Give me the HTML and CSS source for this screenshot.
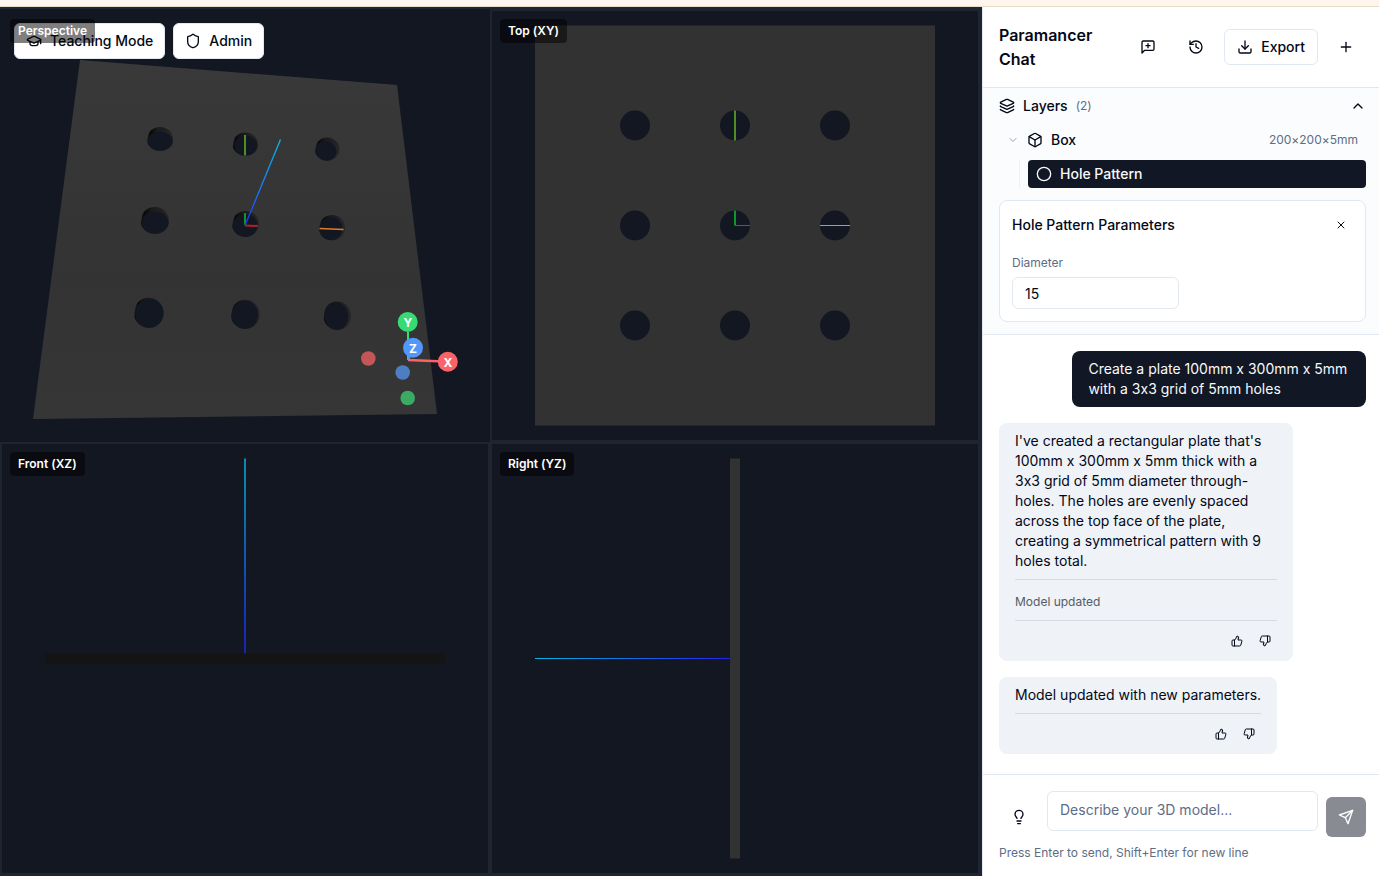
FILE: index.html
```html
<!DOCTYPE html>
<html lang="en">
<head>
    <meta charset="UTF-8">
    <meta name="viewport" content="width=device-width, initial-scale=1.0">
    <title>Paramancer</title>
    <link rel="stylesheet" href="styles.css">
</head>
<body>
    <div class="top-strip"></div>

    <div class="app">
        <main class="workspace">
            <div class="toolbar">
                <button class="tool-button" type="button">
                    <svg class="icon" viewBox="0 0 24 24"><path d="M21.42 10.922a1 1 0 0 0-.019-1.838L12.83 5.18a2 2 0 0 0-1.66 0L2.6 9.08a1 1 0 0 0 0 1.832l8.57 3.908a2 2 0 0 0 1.66 0z"/><path d="M22 10v6"/><path d="M6 12.5V16a6 3 0 0 0 12 0v-3.5"/></svg>
                    Teaching Mode
                </button>
                <button class="tool-button" type="button">
                    <svg class="icon" viewBox="0 0 24 24"><path d="M20 13c0 5-3.5 7.5-7.66 8.95a1 1 0 0 1-.67-.01C7.5 20.5 4 18 4 13V6a1 1 0 0 1 1-1c2 0 4.5-1.2 6.24-2.72a1.17 1.17 0 0 1 1.52 0C14.51 3.81 17 5 19 5a1 1 0 0 1 1 1z"/></svg>
                    Admin
                </button>
            </div>

            <section class="viewport viewport-3d">
                <h2 class="viewport-label">Perspective</h2>
                <svg class="scene" viewBox="0 9 490 433">
                    <defs>
                        <linearGradient id="plate" x1="0" y1="0" x2="0" y2="1">
                            <stop offset="0" stop-color="#393939"/>
                            <stop offset="0.6" stop-color="#333333"/>
                            <stop offset="1" stop-color="#363636"/>
                        </linearGradient>
                        <linearGradient id="wall" x1="0" y1="0.3" x2="1" y2="0.5">
                            <stop offset="0" stop-color="#4a4a4a"/>
                            <stop offset="0.1" stop-color="#080808"/>
                            <stop offset="0.35" stop-color="#1b1b1b"/>
                            <stop offset="1" stop-color="#272727"/>
                        </linearGradient>
                        <linearGradient id="zaxis" gradientUnits="userSpaceOnUse" x1="245" y1="225" x2="280" y2="140">
                            <stop offset="0" stop-color="#1f30ff"/>
                            <stop offset="0.4" stop-color="#1478ff"/>
                            <stop offset="1" stop-color="#08b8e8"/>
                        </linearGradient>
                    </defs>
                    <polygon points="80,60 397,85 437,414 33,419" fill="url(#plate)"/>
                    <g fill="url(#wall)">
                        <ellipse cx="160" cy="139" rx="13" ry="12"/>
                        <ellipse cx="245.3" cy="144.2" rx="12.7" ry="11.6"/>
                        <ellipse cx="327.2" cy="149.2" rx="12.2" ry="11.6"/>
                        <ellipse cx="154.8" cy="220.4" rx="14.2" ry="13.4"/>
                        <ellipse cx="245.5" cy="224" rx="13.5" ry="13"/>
                        <ellipse cx="332" cy="227.7" rx="13" ry="12.7"/>
                        <ellipse cx="148.8" cy="312.8" rx="14.8" ry="15.1"/>
                        <ellipse cx="245.3" cy="314.4" rx="14.4" ry="14.7"/>
                        <ellipse cx="337.3" cy="315.9" rx="13.8" ry="14.3"/>
                    </g>
                    <g fill="#121722">
                        <ellipse cx="160.2" cy="141.3" rx="12.5" ry="9.6"/>
                        <ellipse cx="245.9" cy="145.6" rx="11.5" ry="10"/>
                        <ellipse cx="326" cy="150.8" rx="10.6" ry="9.6" transform="rotate(25 326 150.8)"/>
                        <ellipse cx="155.2" cy="222.6" rx="13.4" ry="11"/>
                        <ellipse cx="245.3" cy="225.5" rx="12.3" ry="11.3"/>
                        <ellipse cx="330.9" cy="228.7" rx="11.6" ry="11.3"/>
                        <ellipse cx="149.4" cy="313.2" rx="14.2" ry="14.4"/>
                        <ellipse cx="244.9" cy="314.9" rx="13.2" ry="14"/>
                        <ellipse cx="336.3" cy="315.9" rx="12" ry="13.6" transform="rotate(-15 336.3 315.9)"/>
                    </g>
                    <g fill="none" stroke-width="2">
                        <path d="M245 135V155.5" stroke="#4f8e22"/>
                        <path d="M245 213V225" stroke="#0f9628"/>
                        <path d="M245 225.5L258 226" stroke="#b3231f"/>
                        <path d="M319.5 228.5L343.5 229.5" stroke="#e07c2c" stroke-width="1.5"/>
                        <path d="M245 225.5L280.5 139.5" stroke="url(#zaxis)" stroke-width="1.3"/>
                    </g>

                    <!-- orientation gizmo -->
                    <circle cx="368.3" cy="358.5" r="7.3" fill="#c45658"/>
                    <circle cx="402.7" cy="372.5" r="7.3" fill="#4b7ec2"/>
                    <circle cx="407.7" cy="398" r="7.3" fill="#3bab64"/>
                    <path d="M408 332V360" stroke="#36dc73" stroke-width="2"/>
                    <path d="M408 360L438 361.3" stroke="#fb6368" stroke-width="2.5"/>
                    <path d="M408 360L412 350" stroke="#5297fa" stroke-width="2.5"/>
                    <circle cx="407.7" cy="322" r="10" fill="#36dc73"/>
                    <circle cx="413" cy="347.7" r="10" fill="#5297fa"/>
                    <circle cx="447.8" cy="361.7" r="10" fill="#fb6368"/>
                    <text class="gizmo-text" x="408" y="327">Y</text>
                    <text class="gizmo-text" x="413" y="353">Z</text>
                    <text class="gizmo-text" x="448" y="367">X</text>
                </svg>
            </section>

            <section class="viewport">
                <h2 class="viewport-label">Top (XY)</h2>
                <svg class="scene" viewBox="-243 -214 486 428">
                    <rect x="-200" y="-200" width="400" height="400" fill="#323232"/>
                    <g fill="#121722">
                        <circle cx="-100" cy="-100" r="15"/>
                        <circle cx="0" cy="-100" r="15"/>
                        <circle cx="100" cy="-100" r="15"/>
                        <circle cx="-100" cy="0" r="15"/>
                        <circle cx="0" cy="0" r="15"/>
                        <circle cx="100" cy="0" r="15"/>
                        <circle cx="-100" cy="100" r="15"/>
                        <circle cx="0" cy="100" r="15"/>
                        <circle cx="100" cy="100" r="15"/>
                    </g>
                    <rect x="-1" y="-115" width="2" height="30" fill="#4f8e22"/>
                    <rect x="-1" y="-15" width="2" height="15" fill="#0f9628"/>
                    <rect x="0" y="-0.5" width="15" height="1" fill="#e0221c"/>
                    <rect x="85" y="-0.5" width="30" height="1" fill="#f08a2a"/>
                </svg>
            </section>

            <section class="viewport">
                <h2 class="viewport-label">Front (XZ)</h2>
                <svg class="scene" viewBox="-243 -214 486 428">
                    <defs>
                        <linearGradient id="front-z" x1="0" y1="1" x2="0" y2="0">
                            <stop offset="0" stop-color="#1a20b4"/>
                            <stop offset="1" stop-color="#0a8fae"/>
                        </linearGradient>
                    </defs>
                    <rect x="-200" y="-5" width="400" height="10" fill="#141414"/>
                    <rect x="-1" y="-200" width="2" height="195" fill="url(#front-z)"/>
                </svg>
            </section>

            <section class="viewport">
                <h2 class="viewport-label">Right (YZ)</h2>
                <svg class="scene" viewBox="-243 -214 486 428">
                    <defs>
                        <linearGradient id="right-z" x1="1" y1="0" x2="0" y2="0">
                            <stop offset="0" stop-color="#2222ee"/>
                            <stop offset="1" stop-color="#08b4e0"/>
                        </linearGradient>
                    </defs>
                    <rect x="-200" y="-0.5" width="195" height="1" fill="url(#right-z)"/>
                    <rect x="-5" y="-200" width="10" height="400" fill="#323232"/>
                </svg>
            </section>
        </main>

        <aside class="sidebar">
            <header class="chat-header">
                <h1>Paramancer Chat</h1>
                <div class="header-actions">
                    <button class="icon-button" type="button" aria-label="Feedback">
                        <svg class="icon" viewBox="0 0 24 24"><path d="M21 15a2 2 0 0 1-2 2H7l-4 4V5a2 2 0 0 1 2-2h14a2 2 0 0 1 2 2z"/><path d="M12 7v6"/><path d="M9 10h6"/></svg>
                    </button>
                    <button class="icon-button" type="button" aria-label="History">
                        <svg class="icon" viewBox="0 0 24 24"><path d="M3 12a9 9 0 1 0 9-9 9.75 9.75 0 0 0-6.74 2.74L3 8"/><path d="M3 3v5h5"/><path d="M12 7v5l4 2"/></svg>
                    </button>
                    <button class="export-button" type="button">
                        <svg class="icon" viewBox="0 0 24 24"><path d="M21 15v4a2 2 0 0 1-2 2H5a2 2 0 0 1-2-2v-4"/><path d="M7 10l5 5 5-5"/><path d="M12 15V3"/></svg>
                        Export
                    </button>
                    <button class="icon-button" type="button" aria-label="New chat">
                        <svg class="icon" viewBox="0 0 24 24"><path d="M5 12h14"/><path d="M12 5v14"/></svg>
                    </button>
                </div>
            </header>

            <section class="layers">
                <button class="layers-toggle" type="button">
                    <svg class="icon" viewBox="0 0 24 24"><path d="M12.83 2.18a2 2 0 0 0-1.66 0L2.6 6.08a1 1 0 0 0 0 1.83l8.58 3.91a2 2 0 0 0 1.66 0l8.58-3.9a1 1 0 0 0 0-1.83z"/><path d="M2 12a1 1 0 0 0 .58.91l8.6 3.91a2 2 0 0 0 1.65 0l8.58-3.9A1 1 0 0 0 22 12"/><path d="M2 17a1 1 0 0 0 .58.91l8.6 3.91a2 2 0 0 0 1.65 0l8.58-3.9A1 1 0 0 0 22 17"/></svg>
                    Layers
                    <span class="count">(2)</span>
                    <svg class="icon push-right" viewBox="0 0 24 24"><path d="M18 15l-6-6-6 6"/></svg>
                </button>

                <button class="layer-row" type="button">
                    <svg class="icon icon-small icon-muted" viewBox="0 0 24 24"><path d="M6 9l6 6 6-6"/></svg>
                    <svg class="icon" viewBox="0 0 24 24"><path d="M21 8a2 2 0 0 0-1-1.73l-7-4a2 2 0 0 0-2 0l-7 4A2 2 0 0 0 3 8v8a2 2 0 0 0 1 1.73l7 4a2 2 0 0 0 2 0l7-4A2 2 0 0 0 21 16z"/><path d="M3.3 7L12 12l8.7-5"/><path d="M12 22V12"/></svg>
                    Box
                    <span class="count push-right">200×200×5mm</span>
                </button>
                <div class="layer-children">
                    <button class="layer-row selected" type="button">
                        <svg class="icon" viewBox="0 0 24 24"><circle cx="12" cy="12" r="10"/></svg>
                        Hole Pattern
                    </button>
                </div>

                <div class="params">
                    <div class="params-header">
                        <h3>Hole Pattern Parameters</h3>
                        <button class="mini-button" type="button" aria-label="Close">
                            <svg class="icon icon-small" viewBox="0 0 24 24"><path d="M18 6L6 18"/><path d="M6 6l12 12"/></svg>
                        </button>
                    </div>
                    <div class="params-grid">
                        <div class="field">
                            <label for="diameter">Diameter</label>
                            <input id="diameter" type="text" inputmode="numeric" value="15">
                        </div>
                    </div>
                </div>
            </section>

            <div class="messages">
                <div class="message user">
                    <p>Create a plate 100mm x 300mm x 5mm with a 3x3 grid of 5mm holes</p>
                </div>
                <div class="message">
                    <p>I've created a rectangular plate that's 100mm x 300mm x 5mm thick with a 3x3 grid of 5mm diameter through-holes. The holes are evenly spaced across the top face of the plate, creating a symmetrical pattern with 9 holes total.</p>
                    <div class="status">Model updated</div>
                    <div class="feedback">
                        <button class="mini-button" type="button" aria-label="Good response">
                            <svg class="icon icon-small" viewBox="0 0 24 24"><path d="M7 10v12"/><path d="M15 5.88L14 10h5.83a2 2 0 0 1 1.92 2.56l-2.33 8A2 2 0 0 1 17.5 22H4a2 2 0 0 1-2-2v-8a2 2 0 0 1 2-2h2.76a2 2 0 0 0 1.79-1.11L12 2a3.13 3.13 0 0 1 3 3.88z"/></svg>
                        </button>
                        <button class="mini-button" type="button" aria-label="Bad response">
                            <svg class="icon icon-small" viewBox="0 0 24 24"><path d="M17 14V2"/><path d="M9 18.12L10 14H4.17a2 2 0 0 1-1.92-2.56l2.33-8A2 2 0 0 1 6.5 2H20a2 2 0 0 1 2 2v8a2 2 0 0 1-2 2h-2.76a2 2 0 0 0-1.79 1.11L12 22a3.13 3.13 0 0 1-3-3.88z"/></svg>
                        </button>
                    </div>
                </div>
                <div class="message">
                    <p>Model updated with new parameters.</p>
                    <div class="feedback">
                        <button class="mini-button" type="button" aria-label="Good response">
                            <svg class="icon icon-small" viewBox="0 0 24 24"><path d="M7 10v12"/><path d="M15 5.88L14 10h5.83a2 2 0 0 1 1.92 2.56l-2.33 8A2 2 0 0 1 17.5 22H4a2 2 0 0 1-2-2v-8a2 2 0 0 1 2-2h2.76a2 2 0 0 0 1.79-1.11L12 2a3.13 3.13 0 0 1 3 3.88z"/></svg>
                        </button>
                        <button class="mini-button" type="button" aria-label="Bad response">
                            <svg class="icon icon-small" viewBox="0 0 24 24"><path d="M17 14V2"/><path d="M9 18.12L10 14H4.17a2 2 0 0 1-1.92-2.56l2.33-8A2 2 0 0 1 6.5 2H20a2 2 0 0 1 2 2v8a2 2 0 0 1-2 2h-2.76a2 2 0 0 0-1.79 1.11L12 22a3.13 3.13 0 0 1-3-3.88z"/></svg>
                        </button>
                    </div>
                </div>
            </div>

            <form class="composer">
                <div class="composer-row">
                    <button class="icon-button" type="button" aria-label="Suggestions">
                        <svg class="icon" viewBox="0 0 24 24"><path d="M15 14c.2-1 .7-1.7 1.5-2.5 1-.9 1.5-2.2 1.5-3.5A6 6 0 0 0 6 8c0 1 .2 2.2 1.5 3.5.7.7 1.3 1.5 1.5 2.5"/><path d="M9 18h6"/><path d="M10 22h4"/></svg>
                    </button>
                    <textarea rows="1" placeholder="Describe your 3D model..." aria-label="Message"></textarea>
                    <button class="icon-button send-button" type="button" aria-label="Send">
                        <svg class="icon" viewBox="0 0 24 24"><path d="M22 2L15 22l-4-9-9-4z"/><path d="M22 2L11 13"/></svg>
                    </button>
                </div>
                <p class="hint">Press Enter to send, Shift+Enter for new line</p>
            </form>
        </aside>
    </div>
</body>
</html>
```

FILE: styles.css
```css
* {
    box-sizing: border-box;
}

body {
    display: flex;
    flex-direction: column;
    height: 100vh;
    margin: 0;
    overflow: hidden;
    font-family: Inter, 'Liberation Sans', sans-serif;
    font-size: 14px;
    font-variant-ligatures: no-contextual;
    line-height: 20px;
    color: #020817;
    background-color: #fff;
}

h1, h2, h3, p {
    margin: 0;
}

button, input, textarea {
    font: inherit;
    font-variant-ligatures: no-contextual;
    color: inherit;
}

button {
    display: flex;
    align-items: center;
    gap: 8px;
    padding: 0;
    border: none;
    background: none;
    font-weight: 500;
    cursor: pointer;
}

.top-strip {
    flex: none;
    height: 7px;
    background-color: #fff5ef;
    border-bottom: 1px solid #e9dcc6;
}

.app {
    display: flex;
    flex: 1;
    min-height: 0;
}

.icon {
    flex: none;
    width: 16px;
    height: 16px;
    fill: none;
    stroke: currentColor;
    stroke-width: 2;
    stroke-linecap: round;
    stroke-linejoin: round;
}

.icon-small {
    width: 12px;
    height: 12px;
}

.icon-muted {
    color: #94a3b8;
}

.push-right {
    margin-left: auto;
}

/* viewports */
.workspace {
    position: relative;
    flex: 1;
    display: grid;
    grid-template-columns: 1fr 1fr;
    grid-template-rows: 1fr 1fr;
    min-width: 0;
    padding: 2px 2px 1px 0;
    background-color: #1e2530;
}

.toolbar {
    position: absolute;
    top: 16px;
    left: 14px;
    display: flex;
    gap: 8px;
    z-index: 1;
}

.tool-button {
    height: 36px;
    padding: 0 11px;
    border: 1px solid #e2e8f0;
    border-radius: 6px;
    background-color: #fff;
}

.viewport {
    position: relative;
    min-width: 0;
    min-height: 0;
    border: 2px solid #1e2530;
    background-color: #121722;
}

.viewport-3d {
    border: none;
}

.viewport-label {
    position: absolute;
    top: 8px;
    left: 8px;
    padding: 4px 8px;
    border-radius: 4px;
    background-color: rgba(0, 0, 0, 0.5);
    color: #fff;
    font-size: 12px;
    font-weight: 600;
    line-height: 16px;
    z-index: 2;
}

.viewport-3d .viewport-label {
    top: 10px;
    left: 10px;
}

.scene {
    display: block;
    width: 100%;
    height: 100%;
}

.gizmo-text {
    fill: #fff;
    font-size: 12px;
    font-weight: 700;
    text-anchor: middle;
}

/* sidebar */
.sidebar {
    display: flex;
    flex-direction: column;
    width: 28.79%;
    min-width: 360px;
    border-left: 1px solid #e2e8f0;
}

.chat-header {
    display: flex;
    align-items: center;
    justify-content: space-between;
    padding: 16px 13px 16px 16px;
    border-bottom: 1px solid #e2e8f0;
}

.chat-header h1 {
    font-size: 16px;
    font-weight: 600;
    line-height: 24px;
}

.header-actions {
    display: flex;
    align-items: center;
    gap: 8px;
}

.icon-button {
    flex: none;
    justify-content: center;
    width: 40px;
    height: 40px;
    border-radius: 6px;
}

.export-button {
    height: 36px;
    padding: 0 12px;
    border: 1px solid #e2e8f0;
    border-radius: 6px;
}

.layers {
    padding: 0 13px 12px 16px;
    border-bottom: 1px solid #e2e8f0;
    background-color: #fbfcfe;
}

.layers-toggle {
    width: 100%;
    height: 36px;
    margin-bottom: 2px;
}

.count {
    font-size: 12px;
    font-weight: 400;
    color: #5d6d86;
}

.layer-row {
    width: 100%;
    height: 28px;
    padding: 0 8px;
    border-radius: 4px;
}

.layer-row.selected {
    background-color: #111724;
    color: #f8fafc;
}

.layer-children {
    margin: 6px 0 12px 20px;
    padding-left: 8px;
    border-left: 1px solid #eef1f6;
}

.params {
    padding: 12px;
    border: 1px solid #e2e8f0;
    border-radius: 8px;
    background-color: #fff;
}

.params-header {
    display: flex;
    align-items: center;
    justify-content: space-between;
    margin-bottom: 18px;
}

.params-header h3 {
    font-size: 14px;
    font-weight: 500;
}

.mini-button {
    justify-content: center;
    width: 24px;
    height: 24px;
}

.params-grid {
    display: grid;
    grid-template-columns: 1fr 1fr;
    gap: 8px;
}

.field label {
    display: block;
    margin-bottom: 6px;
    font-size: 12px;
    line-height: 16px;
    color: #5d6d86;
}

.field input {
    display: block;
    width: 100%;
    height: 32px;
    padding: 0 12px;
    border: 1px solid #e2e8f0;
    border-radius: 6px;
    background-color: #fff;
}

/* messages */
.messages {
    display: flex;
    flex: 1;
    flex-direction: column;
    align-items: flex-start;
    gap: 16px;
    min-height: 0;
    padding: 16px 13px 16px 16px;
    overflow-y: auto;
}

.message {
    max-width: 80%;
    padding: 8px 16px;
    border-radius: 8px;
    background-color: #eff2f7;
}

.message.user {
    align-self: flex-end;
    background-color: #111724;
    color: #f8fafc;
}

.status {
    margin: 8px 0 10px;
    padding-top: 14px;
    border-top: 1px solid #d6dae0;
    font-size: 12px;
    line-height: 16px;
    color: #565b66;
}

.feedback {
    display: flex;
    justify-content: flex-end;
    gap: 4px;
    margin-top: 8px;
    padding-top: 8px;
    border-top: 1px solid #d6dae0;
}

/* composer */
.composer {
    padding: 16px 13px 15px 16px;
    border-top: 1px solid #e2e8f0;
}

.composer-row {
    display: flex;
    align-items: flex-end;
    gap: 8px;
    margin-bottom: 8px;
}

.composer textarea {
    flex: 1;
    min-width: 0;
    height: 40px;
    margin-bottom: 6px;
    padding: 8px 12px;
    border: 1px solid #e2e8f0;
    border-radius: 6px;
    resize: none;
}

.composer textarea::placeholder {
    color: #5d6d86;
}

.send-button {
    background-color: #888b92;
    color: #fff;
}

.hint {
    font-size: 12px;
    line-height: 16px;
    color: #5d6d86;
}
```
